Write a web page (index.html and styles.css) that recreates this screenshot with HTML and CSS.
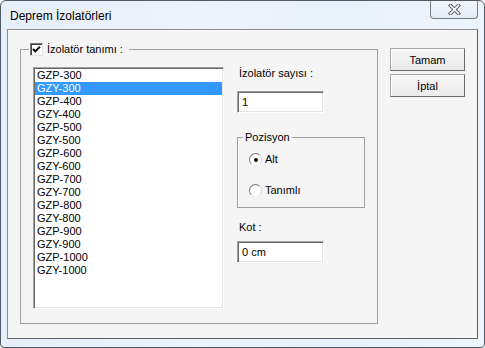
FILE: index.html
```html
<!DOCTYPE html>
<html>
<head>
<meta charset="utf-8">
<link rel="stylesheet" href="styles.css">
</head>
<body>
<div class="window">
  <div class="titlebar">
    <span class="title">Deprem İzolatörleri</span>
    <div class="close">
      <svg width="13" height="11" viewBox="0 0 13 11">
        <path d="M2.5 1.5 L10.5 9.5 M10.5 1.5 L2.5 9.5" stroke="#56657a" stroke-width="3.6" stroke-linecap="square" fill="none"/>
        <path d="M2.5 1.5 L10.5 9.5 M10.5 1.5 L2.5 9.5" stroke="#ffffff" stroke-width="1.6" stroke-linecap="square" fill="none"/>
      </svg>
    </div>
  </div>
  <div class="client">
    <fieldset class="group main">
      <legend class="main-legend">
        <span class="check">
          <svg width="11" height="11" viewBox="0 0 11 11">
            <path d="M2 5 L4.3 7.4 L9 2.6" stroke="#000" stroke-width="2" fill="none"/>
          </svg>
        </span>
        <span class="legend-text">İzolatör tanımı :</span>
      </legend>
      <div class="group-body">
        <div class="listbox">
          <div class="item">GZP-300</div>
          <div class="item selected">GZY-300</div>
          <div class="item">GZP-400</div>
          <div class="item">GZY-400</div>
          <div class="item">GZP-500</div>
          <div class="item">GZY-500</div>
          <div class="item">GZP-600</div>
          <div class="item">GZY-600</div>
          <div class="item">GZP-700</div>
          <div class="item">GZY-700</div>
          <div class="item">GZP-800</div>
          <div class="item">GZY-800</div>
          <div class="item">GZP-900</div>
          <div class="item">GZY-900</div>
          <div class="item">GZP-1000</div>
          <div class="item">GZY-1000</div>
        </div>
        <div class="side">
          <div class="label">İzolatör sayısı :</div>
          <div class="edit">1</div>
          <fieldset class="group pos">
            <legend class="pos-legend">Pozisyon</legend>
            <div class="radios">
              <div class="radio-row"><span class="radio on"></span><span>Alt</span></div>
              <div class="radio-row"><span class="radio"></span><span>Tanımlı</span></div>
            </div>
          </fieldset>
          <div class="label kot">Kot :</div>
          <div class="edit kot-edit">0 cm</div>
        </div>
      </div>
    </fieldset>
    <div class="buttons">
      <button class="btn">Tamam</button>
      <button class="btn">İptal</button>
    </div>
  </div>
</div>
</body>
</html>
```
FILE: styles.css
```css
html, body {
  margin: 0;
  padding: 0;
  background: #ffffff;
}

.window {
  width: 485px;
  height: 348px;
  box-sizing: border-box;
  border: 1px solid #4f5966;
  border-radius: 6px 6px 4px 4px;
  background: linear-gradient(90deg, #e6eef8 0%, #edf3fb 40%, #e9f1fa 70%, #eef4fb 100%);
  display: flex;
  flex-direction: column;
  font-family: "Liberation Sans", Arial, sans-serif;
  font-size: 11px;
  color: #000;
  overflow: hidden;
}

.titlebar {
  height: 28px;
  display: flex;
  align-items: flex-start;
  flex: none;
}

.title {
  padding: 8px 0 0 9px;
  font-size: 12px;
  line-height: 14px;
  color: #000;
}

.close {
  margin-left: auto;
  margin-right: 6px;
  margin-top: -1px;
  width: 48px;
  height: 19px;
  box-sizing: border-box;
  border: 1px solid #6f7c8c;
  border-top: none;
  border-radius: 0 0 4px 4px;
  background: linear-gradient(#f3f7fb, #e4ebf3);
  display: flex;
  align-items: center;
  justify-content: center;
  padding-top: 1px;
}

.client {
  flex: 1;
  margin: 0 6px 8px 6px;
  border: 1px solid;
  border-color: #8c8c8c #5d6066 #5d6066 #8c8c8c;
  background: #f5f5f5;
  display: flex;
  align-items: flex-start;
  padding: 13px 0 0 12px;
}

.group {
  margin: 0;
  padding: 0;
  border: 1px solid #a0a0a0;
  min-width: 0;
}

.main {
  width: 358px;
  height: 281px;
  box-sizing: border-box;
}

.main-legend {
  margin-left: 8px;
  padding: 0 6px 0 1px;
  display: flex;
  align-items: center;
  height: 13px;
  line-height: 13px;
}

.check {
  width: 13px;
  height: 13px;
  box-sizing: border-box;
  border: 1px solid;
  border-color: #7a7a7a #e3e3e3 #e3e3e3 #7a7a7a;
  box-shadow: inset 1px 1px 0 #404040;
  background: #fff;
  display: flex;
  align-items: center;
  justify-content: center;
}

.legend-text {
  margin-left: 4px;
}

.group-body {
  display: flex;
  gap: 13px;
  padding: 11px 0 0 12px;
}

.listbox {
  width: 191px;
  height: 242px;
  box-sizing: border-box;
  border: 1px solid;
  border-color: #a0a0a0 #ffffff #ffffff #a0a0a0;
  box-shadow: inset 1px 1px 0 #696969, inset -1px -1px 0 #e3e3e3;
  background: #fff;
  padding: 1px 1px 1px 1px;
}

.item {
  height: 13px;
  line-height: 13px;
  padding-left: 2px;
  white-space: nowrap;
}

.item.selected {
  background: #3399ff;
  color: #fff;
}

.side {
  width: 128px;
  display: flex;
  flex-direction: column;
}

.label {
  height: 13px;
  line-height: 13px;
  padding-left: 2px;
}

.edit {
  margin-top: 11px;
  width: 87px;
  height: 22px;
  box-sizing: border-box;
  border: 1px solid;
  border-color: #a0a0a0 #ffffff #ffffff #a0a0a0;
  box-shadow: inset 1px 1px 0 #696969, inset -1px -1px 0 #e3e3e3;
  background: #fff;
  padding-left: 4px;
  line-height: 20px;
}

.pos {
  margin-top: 18px;
  width: 128px;
  height: 77px;
  box-sizing: border-box;
}

.pos-legend {
  margin-left: 5px;
  padding: 0 2px;
  height: 13px;
  line-height: 13px;
}

.radios {
  display: flex;
  flex-direction: column;
  gap: 18px;
  padding: 9px 0 0 11px;
}

.radio-row {
  display: flex;
  align-items: center;
  height: 13px;
  line-height: 13px;
}

.radio {
  width: 13px;
  height: 13px;
  box-sizing: border-box;
  border-radius: 50%;
  border: 1px solid;
  border-color: #7a7a7a #d6d6d6 #ececec #7a7a7a;
  background: #fff;
  margin-right: 3px;
  display: flex;
  align-items: center;
  justify-content: center;
}

.radio.on::after {
  content: "";
  width: 4px;
  height: 4px;
  border-radius: 50%;
  background: #000;
}

.kot {
  margin-top: 13px;
}

.kot-edit {
  margin-top: 7px;
}

.buttons {
  margin-left: 12px;
  margin-top: 5px;
  display: flex;
  flex-direction: column;
  gap: 3px;
}

.btn {
  width: 75px;
  height: 23px;
  box-sizing: border-box;
  margin: 0;
  padding: 0;
  border: 1px solid;
  border-color: #a8a8a8 #6a6a6a #6a6a6a #a8a8a8;
  border-radius: 1px;
  box-shadow: inset 1px 1px 0 #ffffff;
  background: linear-gradient(#f6f6f6, #ebebeb);
  font-family: "Liberation Sans", Arial, sans-serif;
  font-size: 11px;
  color: #000;
  line-height: 20px;
  text-align: center;
}
```
